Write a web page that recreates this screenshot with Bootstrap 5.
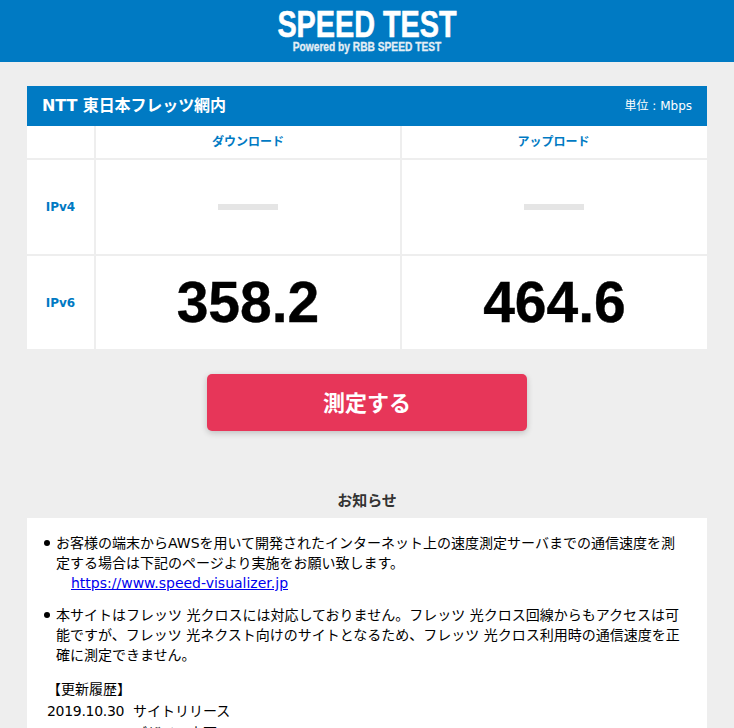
<!DOCTYPE html>
<html lang="ja">
<head>
  <meta charset="UTF-8">
  <title>SPEED TEST</title>
  <link href="https://cdn.jsdelivr.net/npm/bootstrap@5.3.3/dist/css/bootstrap.min.css" rel="stylesheet">
  <style>
    html, body { height: 728px; overflow: hidden; }
    body { background: #eee; color: #000; font-family: "DejaVu Sans", "Noto Sans CJK JP", sans-serif; font-size: 14px; }
    .site-head { background: #007ac3; height: 62px; color: #fff; text-align: center; overflow: hidden; }
    .site-title { font-family: "Liberation Sans", sans-serif; font-weight: 700; font-size: 36px; line-height: 30px; padding-top: 10px; transform: scaleX(.8); white-space: nowrap; -webkit-text-stroke: .6px #fff; }
    .site-sub { font-family: "Liberation Sans", sans-serif; font-weight: 700; font-size: 12px; line-height: 12px; padding-top: 1px; color: #e4eef5; transform: scaleX(.85); -webkit-text-stroke: .3px #e4eef5; }
    .page-wrap { padding: 24px 27px 0; }
    .result-head { background: #007ac3; color: #fff; height: 40px; padding: 0 15px; }
    .result-name { font-size: 16px; font-weight: 700; letter-spacing: -.1px; }
    .result-unit { font-size: 12px; }
    .result-grid { display: grid; grid-template-columns: 67px 1fr 305px; gap: 2px 2px; background: #eee; }
    .result-grid > div { background: #fff; display: flex; align-items: center; justify-content: center; }
    .col-label { height: 32px; color: #007ac3; font-size: 12px; font-weight: 700; }
    .row-label { color: #007ac3; font-size: 12px; font-weight: 700; }
    .row-h4 { height: 94px; }
    .row-h6 { height: 93px; }
    .cell-last { padding-right: 2px; }
    .dash-bar { width: 60px; height: 6px; background: #e5e5e5; }
    .speed-num { font-family: "Liberation Sans", sans-serif; font-size: 57px; font-weight: 700; line-height: 1; -webkit-text-stroke: .4px #000; }
    .measure-btn { display: block; width: 320px; height: 57px; margin: 25px auto 0; padding-top: 8px; background: #e73659; color: #fff; border: 0; border-radius: 5px; font-size: 22px; font-weight: 700; box-shadow: 0 2px 6px rgba(0,0,0,.2); }
    .notice-title { text-align: center; font-weight: 700; font-size: 15px; color: #333; margin-top: 60px; line-height: 20px; }
    .notice-box { background: #fff; margin-top: 7px; padding: 15px 20px 0 19px; height: 300px; font-size: 14px; line-height: 20px; }
    .notice-list { list-style: none; margin: 0 0 13px; padding: 0 0 0 10px; }
    .notice-list li { margin-bottom: 12px; position: relative; }
    .notice-list li::before { content: ""; position: absolute; left: -12px; top: 7px; width: 6px; height: 6px; border-radius: 50%; background: #000; }
    .notice-link { color: #00e; display: inline-block; padding-left: 15px; }
    .history-title { line-height: 22px; padding-left: 1px; }
    .history-row { line-height: 22px; white-space: pre; padding-left: 1px; }
    .history-date { letter-spacing: -.3px; }
  </style>
</head>
<body>

  <!-- Header -->
  <header class="site-head">
    <div class="site-title">SPEED TEST</div>
    <div class="site-sub">Powered by RBB SPEED TEST</div>
  </header>

  <div class="page-wrap">
    <div class="result-head d-flex justify-content-between align-items-center">
      <span class="result-name">NTT 東日本フレッツ網内</span>
      <span class="result-unit">単位 : Mbps</span>
    </div>
    <div class="result-grid">
      <div class="col-label"></div>
      <div class="col-label">ダウンロード</div>
      <div class="col-label cell-last">アップロード</div>

      <div class="row-label row-h4">IPv4</div>
      <div class="row-h4"><span class="dash-bar"></span></div>
      <div class="row-h4 cell-last"><span class="dash-bar"></span></div>

      <div class="row-label row-h6">IPv6</div>
      <div class="row-h6"><span class="speed-num">358.2</span></div>
      <div class="row-h6"><span class="speed-num">464.6</span></div>
    </div>

    <button type="button" class="btn measure-btn">測定する</button>

    <div class="notice-title">お知らせ</div>
    <div class="notice-box">
      <ul class="notice-list">
        <li>お客様の端末からAWSを用いて開発されたインターネット上の速度測定サーバまでの通信速度を測定する場合は下記のページより実施をお願い致します。<br><a class="notice-link" href="#">https://www.speed-visualizer.jp</a></li>
        <li>本サイトはフレッツ 光クロスには対応しておりません。フレッツ 光クロス回線からもアクセスは可能ですが、フレッツ 光ネクスト向けのサイトとなるため、フレッツ 光クロス利用時の通信速度を正確に測定できません。</li>
      </ul>
      <div class="history-title">【更新履歴】</div>
      <div class="history-row"><span class="history-date">2019.10.30</span>  サイトリリース</div>
      <div class="history-row"><span class="history-date">2020.04.01</span>  デザイン変更</div>
    </div>
  </div>

  <script src="https://cdn.jsdelivr.net/npm/bootstrap@5.3.3/dist/js/bootstrap.bundle.min.js"></script>
</body>
</html>
